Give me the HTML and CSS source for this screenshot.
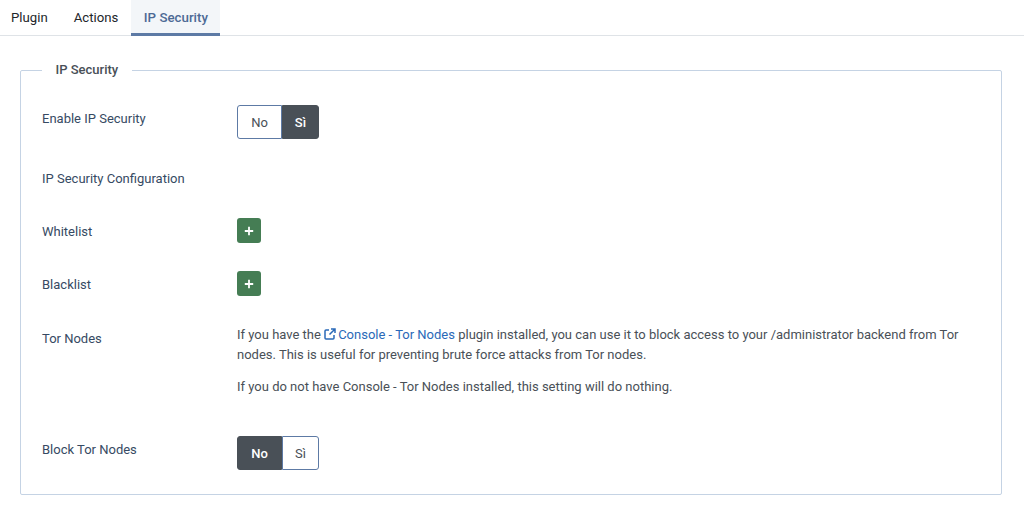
FILE: index.html
```html
<!DOCTYPE html>
<html lang="en">
<head>
<meta charset="utf-8">
<title>IP Security</title>
<link rel="stylesheet" href="styles.css">
</head>
<body>
<nav class="tabs">
  <a class="tab">Plugin</a>
  <a class="tab">Actions</a>
  <a class="tab active">IP Security</a>
</nav>
<main class="content">
  <fieldset class="panel">
    <legend class="legend">IP Security</legend>
    <div class="row row-enable">
      <div class="label">Enable IP Security</div>
      <div class="switch">
        <span class="opt">No</span>
        <span class="opt on end">Sì</span>
      </div>
    </div>
    <div class="row row-config">
      <div class="label">IP Security Configuration</div>
    </div>
    <div class="row row-list">
      <div class="label">Whitelist</div>
      <button class="add" type="button"><svg width="10" height="10" viewBox="0 0 10 10"><path d="M5 .8v8.400M.8 5h8.400" stroke="#fff" stroke-width="1.800" fill="none"/></svg></button>
    </div>
    <div class="row row-list">
      <div class="label">Blacklist</div>
      <button class="add" type="button"><svg width="10" height="10" viewBox="0 0 10 10"><path d="M5 .8v8.400M.8 5h8.400" stroke="#fff" stroke-width="1.800" fill="none"/></svg></button>
    </div>
    <div class="row row-tor">
      <div class="label">Tor Nodes</div>
      <div class="desc">
        <p>If you have the <a class="link"><svg class="ext" width="12" height="12" viewBox="0 0 12 12"><path d="M5 2H2a1 1 0 0 0-1 1v7a1 1 0 0 0 1 1h7a1 1 0 0 0 1-1V7M7 1h4v4M11 1 5.500 6.500" stroke="#2a69b8" stroke-width="1.500" fill="none"/></svg>Console - Tor Nodes</a> plugin installed, you can use it to block access to your /administrator backend from Tor nodes. This is useful for preventing brute force attacks from Tor nodes.</p>
        <p>If you do not have Console - Tor Nodes installed, this setting will do nothing.</p>
      </div>
    </div>
    <div class="row row-block">
      <div class="label">Block Tor Nodes</div>
      <div class="switch">
        <span class="opt on">No</span>
        <span class="opt end">Sì</span>
      </div>
    </div>
  </fieldset>
</main>
</body>
</html>
```
FILE: styles.css
```css
* { box-sizing: border-box; }
html, body { margin: 0; background: #fff; }
body {
  font-family: Roboto, "Noto Sans", sans-serif;
  font-size: 13px;
  color: #495057;
  height: 531px;
  overflow: hidden;
}
.tabs {
  display: flex;
  height: 36px;
  border-bottom: 1px solid #dfe3e7;
}
.tab {
  display: block;
  height: 36px;
  padding: 0 13px;
  line-height: 35px;
  font-size: 13.200px;
  font-weight: 400;
  color: #22262a;
}
.tab:first-child { padding-left: 11px; }
.tab.active {
  background: #f3f6f9;
  color: #4d6a95;
  border-bottom: 3px solid #5d7aa5;
  font-weight: 500;
  font-size: 13.300px;
  padding: 0 12.500px;
}
.content { padding: 25px 22px 0 20px; }
.panel {
  margin: 0;
  padding: 0 21px 0 21px;
  height: 434px;
  border: 1px solid #c5d3e4;
  border-radius: 2px;
  min-width: 0;
}
.legend {
  margin-left: 0;
  padding: 0 14px 0 13.500px;
  font-size: 13px;
  font-weight: 500;
  line-height: 18px;
  color: #495057;
}
.row { display: flex; align-items: flex-start; }
.label {
  width: 195px;
  flex: none;
  color: #364a63;
  font-size: 13px;
  font-weight: 400;
  line-height: 18px;
}
.row-enable { margin-top: 26px; height: 34px; }
.row-enable .label { margin-top: 5px; }
.row-config { margin-top: 31px; }
.row-list { height: 27px; margin-top: 26px; }
.row-list .label { margin-top: 5px; }
.row-config + .row-list { margin-top: 30px; }
.row-tor { margin-top: 27px; }
.row-tor .label { margin-top: 5px; }
.row-block { margin-top: 27px; }
.row-block .label { margin-top: 5px; }
.switch {
  display: flex;
  width: 82px;
  height: 34px;
}
.opt {
  flex: 1 1 auto;
  display: flex;
  align-items: center;
  justify-content: center;
  border: 1px solid #5d7aa5;
  color: #495057;
  font-size: 13px;
  font-weight: 400;
  background: #fff;
  border-radius: 3px 0 0 3px;
  width: 45px;
}
.opt.end { width: 37px; border-radius: 0 3px 3px 0; }
.opt.on {
  background: #495057;
  border-color: #495057;
  color: #fff;
  font-weight: 500;
}
.add {
  display: flex;
  align-items: center;
  justify-content: center;
  width: 24px;
  height: 25px;
  padding: 0;
  border: 0;
  border-radius: 3px;
  background: #457d54;
}
.desc {
  width: 745px;
  font-size: 13px;
  line-height: 20px;
  color: #495057;
}
.desc p { margin: 0 0 12px; }
.link { color: #2a69b8; }
.ext { vertical-align: -1px; margin-right: 2px; }
```
